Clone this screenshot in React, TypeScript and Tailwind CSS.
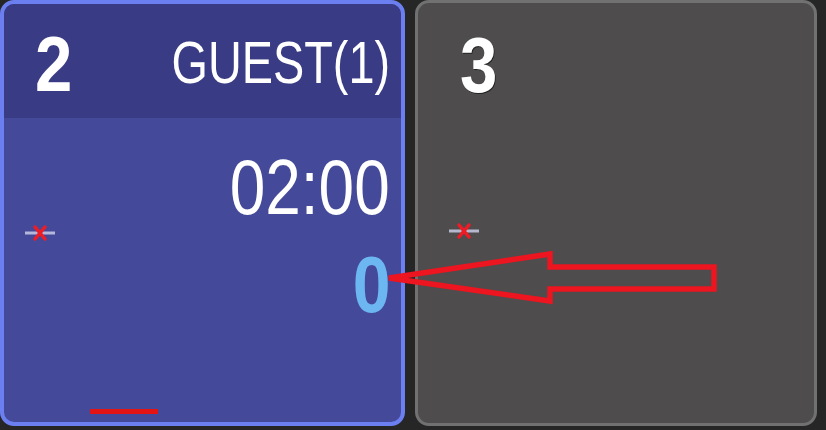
import React from "react";

const font = "font-['Liberation_Sans',Arial,sans-serif]";

const MuteMark = () => (
  <svg width="32" height="18" viewBox="0 0 32 18" className="block">
    <rect x="1" y="7.5" width="30" height="3" fill="#c9cbe6" opacity="0.85" />
    <path d="M11 3 L21 15 M21 3 L11 15" stroke="#ee1c25" strokeWidth="3.5" strokeLinecap="round" />
  </svg>
);

const Arrow = () => (
  <svg
    className="absolute left-0 top-0 pointer-events-none"
    width="826"
    height="430"
    viewBox="0 0 826 430"
  >
    <path
      d="M389 278 L550 254 L550 267 L714 267 L714 289 L550 289 L550 301 Z"
      fill="none"
      stroke="#ec1520"
      strokeWidth="5.5"
      strokeLinejoin="miter"
    />
  </svg>
);

export default function App() {
  return (
    <div className={`relative w-[826px] h-[430px] overflow-hidden bg-[#262626] ${font}`}>
      <div className="flex h-[426px] gap-[10px]">
        {/* active tile */}
        <div className="w-[405px] h-full flex flex-col rounded-[14px] border-4 border-[#6b7ff0] bg-[#45499a] overflow-hidden">
          <div className="h-[114px] shrink-0 flex items-start justify-between bg-[#393c85] pl-[31px] pr-[11px] text-white">
            <span className="block mt-[21px] text-[78px] font-bold leading-none scale-x-[0.86] origin-left">2</span>
            <span className="block mt-[29px] text-[60px] leading-none scale-x-[0.78] origin-right">GUEST(1)</span>
          </div>
          <div className="flex-1 flex flex-col pr-[11px] pl-[20px]">
            <span className="block self-end mt-[31px] text-[77px] leading-none text-white scale-x-[0.83] origin-right">02:00</span>
            <div className="flex items-start justify-between">
              <div className="mt-[-2px]">
                <MuteMark />
              </div>
              <span className="block mt-[19px] text-[80px] font-bold leading-none text-[#6cb6f2] scale-x-[0.85] origin-right">0</span>
            </div>
            <div className="mt-auto mb-[8px] ml-[66px] w-[68px] h-[5px] bg-[#e41414]" />
          </div>
        </div>
        {/* idle tile */}
        <div className="w-[402px] h-full flex flex-col rounded-[14px] border-[3px] border-[#717171] bg-[#4e4c4c] overflow-hidden">
          <div className="flex items-start pl-[42px] text-white">
            <span className="block mt-[23px] text-[78px] font-bold leading-none scale-x-[0.86] origin-left [text-shadow:1px_1px_0_#222]">3</span>
          </div>
          <div className="pl-[30px] mt-[118px]">
            <MuteMark />
          </div>
        </div>
      </div>
      <Arrow />
    </div>
  );
}
